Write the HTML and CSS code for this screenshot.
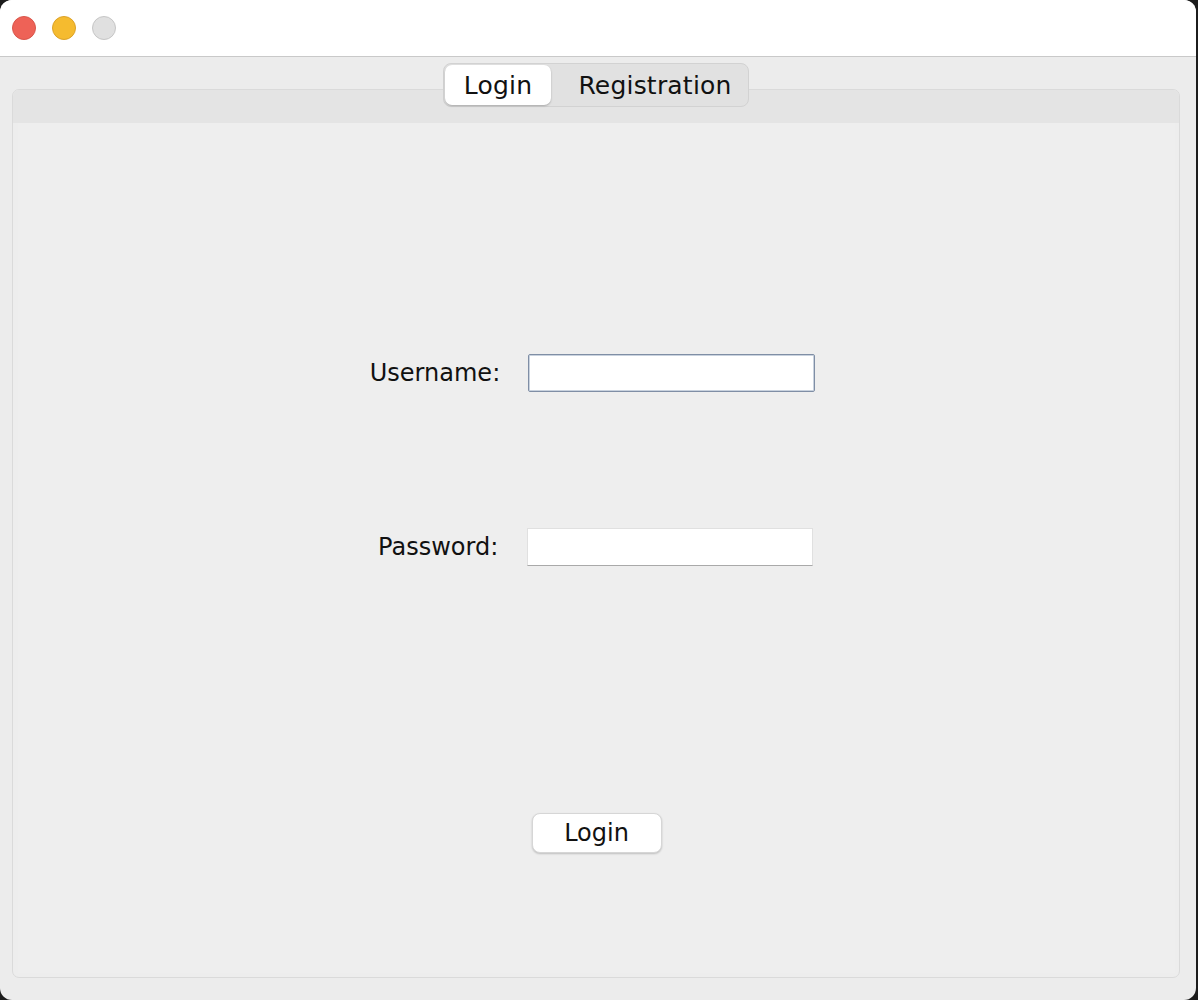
FILE: index.html
```html
<!DOCTYPE html>
<html lang="en">

<head>
    <meta charset="UTF-8">
    <title>Login</title>
    <link rel="stylesheet" href="styles.css">
</head>

<body>
    <div class="window">
        <!-- Title bar with traffic lights -->
        <div class="titlebar">
            <span class="light close"></span>
            <span class="light minimize"></span>
            <span class="light zoom"></span>
        </div>

        <div class="window-body">
            <div class="tab-bar">
                <div class="tabs">
                    <button class="tab active">Login</button>
                    <button class="tab">Registration</button>
                </div>
            </div>

            <div class="tab-panel">
                <div class="panel-top"></div>
                <div class="panel-content">
                    <form class="login-form" onsubmit="return false">
                        <label class="field-label username-label" for="username">Username:</label>
                        <input id="username" class="field username" type="text">

                        <label class="field-label password-label" for="password">Password:</label>
                        <input id="password" class="field password" type="password">
                    </form>

                    <button class="login-button">Login</button>
                </div>
            </div>
        </div>
    </div>
</body>

</html>
```

FILE: styles.css
```css
/* styles.css */
html,
body {
    margin: 0;
    padding: 0;
    background-color: #1c1c1c;
    font-family: "DejaVu Sans", "Liberation Sans", sans-serif;
    color: #111111;
}

.window {
    width: 1196px;
    height: 1000px;
    background-color: #ececec;
    border-radius: 12px;
    overflow: hidden;
    display: flex;
    flex-direction: column;
}

.titlebar {
    height: 56px;
    background-color: #ffffff;
    border-bottom: 1px solid #c9c9c9;
    display: flex;
    align-items: center;
    gap: 16px;
    padding-left: 12px;
    flex-shrink: 0;
}

.light {
    width: 24px;
    height: 24px;
    border-radius: 50%;
    box-sizing: border-box;
}

.close {
    background-color: #ee6257;
    border: 1px solid #d9564b;
}

.minimize {
    background-color: #f5bb2f;
    border: 1px solid #dca228;
}

.zoom {
    background-color: #e0e0e0;
    border: 1px solid #c6c6c6;
}

.window-body {
    flex: 1;
    display: flex;
    flex-direction: column;
    padding: 6px 16px 22px 12px;
}

.tab-bar {
    display: flex;
    justify-content: center;
    margin-bottom: -18px;
    position: relative;
    z-index: 1;
}

.tabs {
    display: flex;
    background-color: #e1e1e1;
    border: 1px solid #d2d2d2;
    border-radius: 8px;
    padding: 1px;
}

.tab {
    font-family: inherit;
    font-size: 25px;
    letter-spacing: 0.2px;
    color: #111111;
    background: none;
    border: none;
    height: 40px;
    border-radius: 7px;
}

.tab.active {
    background-color: #ffffff;
    box-shadow: 0 1px 2px rgba(0, 0, 0, 0.25);
    padding: 0 18px;
    width: 106px;
}

.tab:not(.active) {
    padding: 0 14px 0 26px;
    width: 196px;
}

.tab-panel {
    flex: 1;
    display: flex;
    flex-direction: column;
    border: 1px solid #dadada;
    border-radius: 7px;
    background-color: #ededed;
    overflow: hidden;
}

.panel-top {
    height: 33px;
    background-color: #e4e4e4;
    flex-shrink: 0;
}

.panel-content {
    flex: 1;
    margin: 0 4px 4px 5px;
    background-color: #eeeeee;
    display: flex;
    flex-direction: column;
    align-items: center;
}

.login-form {
    display: grid;
    grid-template-columns: auto 287px;
    column-gap: 28px;
    row-gap: 136px;
    align-items: center;
    margin-top: 231px;
    margin-right: 8px;
}

.field-label {
    font-size: 24px;
    text-align: right;
}

.password-label {
    margin-right: 2px;
}

.field {
    height: 38px;
    box-sizing: border-box;
    background-color: #ffffff;
    font-size: 20px;
    font-family: inherit;
    padding: 0 6px;
    outline: none;
}

.username {
    border: 1px solid #7f8ea5;
    border-radius: 2px;
    box-shadow: inset 0 0 0 1px #c9d2de;
}

.password {
    border: 1px solid #e0e0e0;
    border-bottom: 1px solid #a9a9a9;
    margin-left: -1px;
    width: 286px;
}

.login-button {
    margin-top: 247px;
    width: 130px;
    height: 40px;
    font-family: inherit;
    font-size: 24px;
    color: #111111;
    background-color: #ffffff;
    border: 1px solid #d6d6d6;
    border-radius: 8px;
    box-shadow: 0 1px 2px rgba(0, 0, 0, 0.2);
}
```
